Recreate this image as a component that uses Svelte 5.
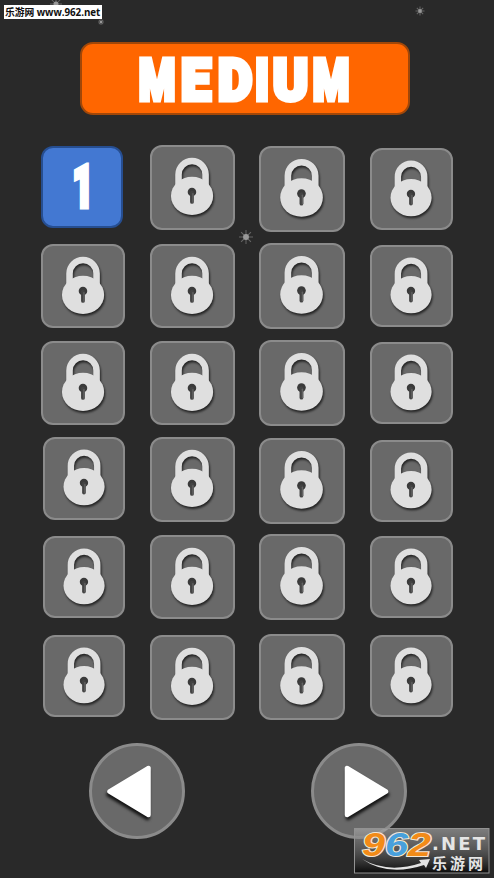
<script>
  // Each tile: x/y inset inside its grid cell, and its side length.
  const tiles = [
    [0.5, 0.5, 82.5], [0, 0, 84.5], [0, 1, 85.5], [1, 2.5, 82.5],
    [0.5, 0.5, 84.5], [0, 0.5, 84.5], [0, 0, 85.5], [1, 1.5, 82.5],
    [0.5, 0.5, 84.5], [0, 0.5, 84.5], [0, 0, 85.5], [1, 1.5, 82.5],
    [2.5, 0, 82.5], [0, 0, 84.5], [0, 1, 85.5], [1, 2.5, 82.5],
    [2.5, 1.5, 82.5], [0, 0.5, 84.5], [0, 0, 85.5], [1, 1.5, 82.5],
    [2.5, 1.5, 82.5], [0, 2, 84.5], [0, 1, 85.5], [1, 1.5, 82.5]
  ];
  const stars = [
    { x: 56, y: 4, r: 6 },
    { x: 101, y: 22, r: 3 },
    { x: 420, y: 11, r: 4.5 },
    { x: 246, y: 237, r: 7 }
  ];
  const title = [
    ['M', 157, 0.72],
    ['E', 196, 0.92],
    ['D', 235, 0.91],
    ['I', 262, 0.8],
    ['U', 290.5, 0.92],
    ['M', 331, 0.72]
  ];
</script>

<main>
  {#each stars as s}
    <svg class="star" style="left:{s.x - 8}px;top:{s.y - 8}px" width="16" height="16" viewBox="-8 -8 16 16">
      <g stroke="#777" stroke-width="1" opacity=".8">
        {#each [0, 45, 90, 135] as a}
          <line x1={-s.r} x2={s.r} y1="0" y2="0" transform="rotate({a})" />
        {/each}
      </g>
      <circle r={s.r * 0.42} fill="#999" />
    </svg>
  {/each}

  <div class="site">乐游网 www.962.net</div>

  <header>
    <svg width="330" height="73" viewBox="80 42 330 73">
      {#each title as [letter, x, scale]}
        <text class="block" text-anchor="middle" transform="translate({x} 99.7) scale({scale} 1)">{letter}</text>
      {/each}
    </svg>
  </header>

  <section class="levels">
    {#each tiles as [dx, dy, size], i}
      <div class="tile" class:open={i === 0} style="margin:{dy}px 0 0 {dx}px;width:{size}px;height:{size}px">
        {#if i === 0}
          <svg viewBox="0 0 82 82">
            <text class="block one" text-anchor="middle" transform="translate(41.8 61) scale(.62 1)">1</text>
          </svg>
        {:else}
          <svg viewBox="0 0 85 85">
            <g class="lock">
              <path d="M28.7 44V29.7a13.6 13.6 0 0 1 27.2 0V44" fill="none" stroke="#dfdfdf" stroke-width="6.6" />
              <ellipse cx="42.3" cy="51.2" rx="21.2" ry="19.2" fill="#dfdfdf" />
            </g>
            <circle cx="42.2" cy="47.3" r="4.3" fill="#3a3a3a" />
            <path d="M42.2 48v9.3" stroke="#444" stroke-width="3.8" stroke-linecap="round" />
            <path d="M43.2 49v8.5" stroke="#626262" stroke-width="1.4" stroke-linecap="round" />
          </svg>
        {/if}
      </div>
    {/each}
  </section>

  <nav>
    <div class="round">
      <svg viewBox="0 0 96 96"><path class="arrow left" d="M20.5 48.5L59.5 25V72Z" /></svg>
    </div>
    <div class="round">
      <svg viewBox="0 0 96 96"><path class="arrow" d="M75 48.5L36 25V72Z" /></svg>
    </div>
  </nav>

  <svg class="mark" width="136" height="46" viewBox="0 0 136 46">
    <defs>
      <linearGradient id="shade" x2="0" y2="1">
        <stop offset="0" stop-color="#aaa" stop-opacity=".65" />
        <stop offset=".48" stop-color="#666" stop-opacity=".72" />
        <stop offset="1" stop-color="#080808" stop-opacity=".95" />
      </linearGradient>
    </defs>
    <rect x=".5" y=".5" width="134.5" height="44.5" fill="url(#shade)" stroke="#929292" />
    <path d="M8 31Q34 46 67 35L65 32L76 31L72 40L70 37Q34 49 8 31Z" fill="#e4e4e4" />
    <g class="digits">
      <text x="8" y="28" textLength="23" lengthAdjust="spacingAndGlyphs" fill="#f28b18">9</text>
      <text x="31" y="28" textLength="23" lengthAdjust="spacingAndGlyphs" fill="#48a0dc">6</text>
      <text x="54" y="28" textLength="23" lengthAdjust="spacingAndGlyphs" fill="#f28b18">2</text>
    </g>
    <text class="net" x="78" y="22" textLength="53">.NET</text>
    <text class="cn" x="78" y="40.5" textLength="51">乐游网</text>
  </svg>
</main>

<style>
  :global(body) { margin: 0; background: #292929; }
  main {
    position: relative;
    width: 494px;
    height: 878px;
    overflow: hidden;
    display: flex;
    flex-direction: column;
    background: #292929;
    font-family: "Liberation Sans", "Noto Sans CJK SC", sans-serif;
  }
  .star { position: absolute; filter: blur(.4px); }
  .site {
    position: relative;
    box-sizing: border-box;
    width: 98px;
    height: 14px;
    margin: 5px 0 0 4px;
    padding-left: 1px;
    background: #fff;
    color: #111;
    font: bold 9.8px/15px "Open Sans", "Noto Sans CJK SC", sans-serif;
    letter-spacing: -.05px;
    white-space: nowrap;
  }
  header {
    box-sizing: border-box;
    width: 330px;
    height: 73px;
    margin: 23px 0 0 80px;
    border: 2px solid #a14708;
    border-radius: 13px;
    background: #ff6600;
  }
  header svg { display: block; margin: -2px; }
  .block {
    font: 900 58px Roboto, sans-serif;
    fill: #fff;
    stroke: #fff;
    stroke-width: 5px;
    stroke-linejoin: miter;
  }
  .one { font-size: 58px; stroke-width: 5px; }
  .levels {
    display: grid;
    grid-template-columns: 110px 109px 110px 86px;
    grid-template-rows: 98px 97px 97px 97px 99px 86px;
    margin: 30px 0 0 40px;
  }
  .tile {
    box-sizing: border-box;
    border: 2px solid #8b8b8b;
    border-radius: 12px;
    background: #696969;
  }
  .tile.open { border-color: #264e91; background: #4378d2; }
  .tile svg { display: block; width: calc(100% + 4px); height: calc(100% + 4px); margin: -2px; }
  .lock { filter: drop-shadow(1.5px 2px 1.3px #222); }
  nav {
    display: flex;
    gap: 126px;
    margin: 24px 0 0 88.5px;
  }
  .round {
    box-sizing: border-box;
    width: 96px;
    height: 96px;
    border: 3px solid #8b8b8b;
    border-radius: 50%;
    background: #696969;
  }
  .round svg { display: block; width: 96px; height: 96px; margin: -3px; }
  .arrow {
    fill: #fff;
    stroke: #fff;
    stroke-width: 4.5px;
    stroke-linejoin: round;
    filter: drop-shadow(1px 3px 1.5px #151515);
  }
  .arrow.left { filter: drop-shadow(-1px 3px 1.5px #151515); }
  .mark { position: absolute; left: 354px; top: 828px; overflow: visible; }
  .digits {
    font: italic bold 33px "Liberation Sans", sans-serif;
    stroke: #f3e7d6;
    stroke-width: 2px;
    paint-order: stroke;
  }
  .net { font: bold 18px "DejaVu Sans", sans-serif; fill: #e5e5e5; }
  .cn { font: bold 15px "Noto Sans CJK SC", sans-serif; fill: #e5e5e5; }
</style>
